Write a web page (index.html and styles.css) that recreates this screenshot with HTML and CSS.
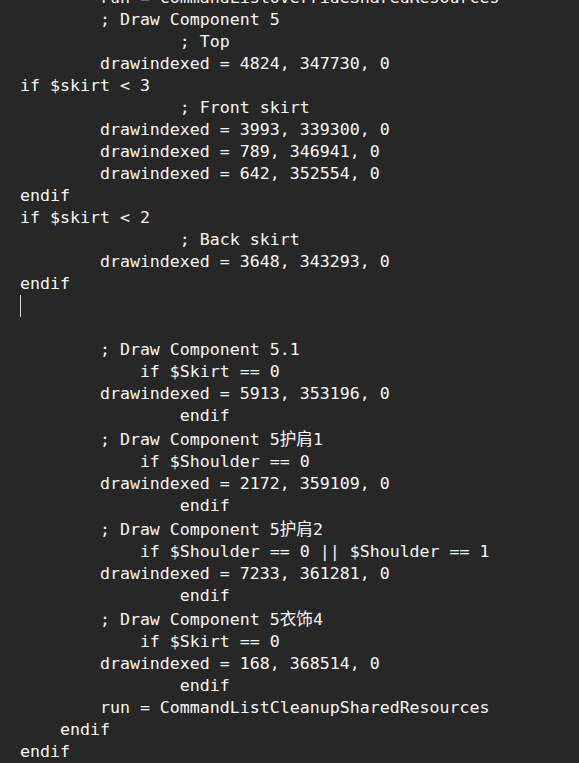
FILE: index.html
```html
<!DOCTYPE html>
<html lang="zh">
<head>
<meta charset="utf-8">
<title>ini</title>
<link rel="stylesheet" href="styles.css">
</head>
<body>
<div class="editor">
<div class="line">        run = CommandListOverrideSharedResources</div>
<div class="line">        ; Draw Component 5</div>
<div class="line">                ; Top</div>
<div class="line">        drawindexed = 4824, 347730, 0</div>
<div class="line">if $skirt &lt; 3</div>
<div class="line">                ; Front skirt</div>
<div class="line">        drawindexed = 3993, 339300, 0</div>
<div class="line">        drawindexed = 789, 346941, 0</div>
<div class="line">        drawindexed = 642, 352554, 0</div>
<div class="line">endif</div>
<div class="line">if $skirt &lt; 2</div>
<div class="line">                ; Back skirt</div>
<div class="line">        drawindexed = 3648, 343293, 0</div>
<div class="line">endif</div>
<div class="line"><span class="caret"></span></div>
<div class="line"> </div>
<div class="line">        ; Draw Component 5.1</div>
<div class="line">            if $Skirt == 0</div>
<div class="line">        drawindexed = 5913, 353196, 0</div>
<div class="line">                endif</div>
<div class="line cjk">        ; Draw Component 5护肩1</div>
<div class="line">            if $Shoulder == 0</div>
<div class="line">        drawindexed = 2172, 359109, 0</div>
<div class="line">                endif</div>
<div class="line cjk">        ; Draw Component 5护肩2</div>
<div class="line">            if $Shoulder == 0 || $Shoulder == 1</div>
<div class="line">        drawindexed = 7233, 361281, 0</div>
<div class="line">                endif</div>
<div class="line cjk">        ; Draw Component 5衣饰4</div>
<div class="line">            if $Skirt == 0</div>
<div class="line">        drawindexed = 168, 368514, 0</div>
<div class="line">                endif</div>
<div class="line">        run = CommandListCleanupSharedResources</div>
<div class="line">    endif</div>
<div class="line">endif</div>
</div>
</body>
</html>
```
FILE: styles.css
```css
html, body {
  margin: 0;
  padding: 0;
  background: #272727;
  overflow: hidden;
}
.editor {
  margin-top: -13px;
  padding-left: 20px;
  font-family: "DejaVu Sans Mono", "Noto Sans CJK SC", monospace;
  font-size: 16.6px;
  color: #f6f6f6;
}
.line {
  height: 22px;
  line-height: 22px;
  white-space: pre;
}
.cjk {
  padding-top: 2px;
}
.caret {
  display: inline-block;
  width: 1px;
  height: 22px;
  background: #d8d8d8;
  vertical-align: top;
}
```
